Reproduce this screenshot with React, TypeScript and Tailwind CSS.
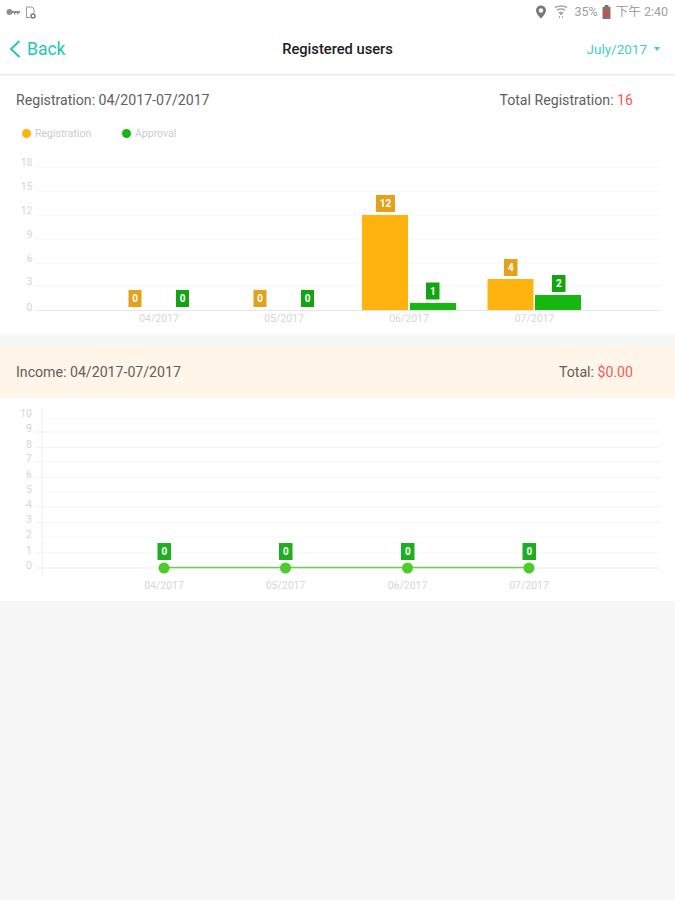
import React from "react";

const ORANGE = "#ffb30f";
const ORANGE_L = "#e3a21a";
const GREEN = "#16b80f";
const GREEN_L = "#12a412";
const LBL = "#d6d6d6";
const FONT = "Roboto, 'Noto Sans CJK TC', sans-serif";

function Tag({ x, y, w, h, fill, t }: { x: number; y: number; w: number; h: number; fill: string; t: string }) {
  return (
    <g>
      <rect x={x} y={y} width={w} height={h} fill={fill} />
      <text x={x + w / 2} y={y + h / 2 + 3.5} textAnchor="middle" fontSize="10" fontWeight="700" fill="#fff" fontFamily={FONT}>
        {t}
      </text>
    </g>
  );
}

function BarChart() {
  const ys: [string, number][] = [["18", 167], ["15", 191], ["12", 215], ["9", 239], ["6", 263], ["3", 286]];
  return (
    <svg width="675" height="192" viewBox="0 142 675 192" className="block">
      {ys.map(([l, y]) => (
        <g key={l}>
          <line x1="35" x2="660" y1={y} y2={y} stroke="#f5f5f5" />
          <text x="32.5" y={y - 1} textAnchor="end" fontSize="10.5" fill={LBL} fontFamily={FONT}>{l}</text>
        </g>
      ))}
      <text x="32.5" y="311" textAnchor="end" fontSize="10.5" fill={LBL} fontFamily={FONT}>0</text>
      <line x1="35" x2="660" y1="310.5" y2="310.5" stroke="#e6e6e6" />
      <rect x="362" y="215" width="46" height="95" fill={ORANGE} />
      <rect x="410" y="303" width="46" height="7" fill={GREEN} />
      <rect x="487.5" y="279" width="46" height="31" fill={ORANGE} />
      <rect x="535" y="295" width="46" height="15" fill={GREEN} />
      <Tag x={128.5} y={290} w={13} h={17} fill={ORANGE_L} t="0" />
      <Tag x={176} y={290} w={13} h={17} fill={GREEN_L} t="0" />
      <Tag x={253.5} y={290} w={13} h={17} fill={ORANGE_L} t="0" />
      <Tag x={301} y={290} w={13} h={17} fill={GREEN_L} t="0" />
      <Tag x={376} y={195} w={19} h={17} fill={ORANGE_L} t="12" />
      <Tag x={426} y={282.5} w={13.5} h={17} fill={GREEN_L} t="1" />
      <Tag x={504} y={259} w={13.5} h={17} fill={ORANGE_L} t="4" />
      <Tag x={552} y={275} w={13.5} h={17} fill={GREEN_L} t="2" />
      {[["04/2017", 159], ["05/2017", 284], ["06/2017", 409], ["07/2017", 534.5]].map(([l, x]) => (
        <text key={l as string} x={x as number} y="322" textAnchor="middle" fontSize="10.5" fill={LBL} fontFamily={FONT}>{l}</text>
      ))}
    </svg>
  );
}

function LineChart() {
  const rows: [string, number][] = [
    ["10", 419], ["9", 432], ["8", 447.5], ["7", 462], ["6", 477.5], ["5", 492], ["4", 507], ["3", 522.5], ["2", 537], ["1", 553],
  ];
  const labelY: Record<string, number> = { "10": 417, "9": 432, "8": 448, "7": 462, "6": 478, "5": 493, "4": 508, "3": 523, "2": 538, "1": 554 };
  const xs = [164, 285.5, 407.5, 529];
  return (
    <svg width="675" height="203" viewBox="0 398 675 203" className="block">
      {rows.map(([l, y]) => (
        <g key={l}>
          <line x1="35" x2="660" y1={y} y2={y} stroke={l === "10" || l === "5" || l === "2" ? "#fafafa" : "#f3f3f3"} />
          <text x="32" y={labelY[l]} textAnchor="end" fontSize="10.5" fill={LBL} fontFamily={FONT}>{l}</text>
        </g>
      ))}
      <text x="32" y="569" textAnchor="end" fontSize="10.5" fill={LBL} fontFamily={FONT}>0</text>
      <line x1="35" x2="660" y1="568" y2="568" stroke="#eeeeee" />
      <line x1="42" x2="42" y1="408" y2="577" stroke="#eeeeee" />
      <line x1="164" x2="529" y1="567.5" y2="567.5" stroke="#66d150" strokeWidth="1.5" />
      {xs.map((x, i) => (
        <g key={x}>
          <circle cx={x} cy="568" r="5.5" fill="#4fcb2c" />
          <Tag x={x - 6.5} y={543} w={13.5} h={17} fill="#1fae1f" t="0" />
          <text x={x} y="589" textAnchor="middle" fontSize="10.5" fill={LBL} fontFamily={FONT}>{["04/2017", "05/2017", "06/2017", "07/2017"][i]}</text>
        </g>
      ))}
    </svg>
  );
}

export default function App() {
  return (
    <div className="w-[675px] h-[900px] bg-[#f7f7f7] overflow-hidden font-['Roboto','Noto_Sans_CJK_TC',sans-serif]">
      {/* status bar */}
      <div className="h-6 bg-white flex items-center justify-between pl-[6px] pr-[7px] text-[#a0a0a0]">
        <div className="flex items-center gap-[5px]">
          <svg width="14" height="8" viewBox="0 0 14 8">
            <circle cx="3.5" cy="4" r="3" fill="#8f8f8f" />
            <path d="M6 3H14V5H12.5V6.5H11V5H9.5V6.5H8V5H6z" fill="#8f8f8f" />
          </svg>
          <svg width="11" height="13" viewBox="0 0 11 13" fill="none">
            <path d="M7 1H1.5V11.5H5" stroke="#9a9a9a" />
            <path d="M7 1L9 3V7" stroke="#9a9a9a" />
            <circle cx="8" cy="10" r="2" stroke="#777" strokeWidth="1.4" />
          </svg>
        </div>
        <div className="flex items-center text-[12.5px] leading-none">
          <svg width="12" height="14" viewBox="0 0 12 14" className="mr-[7px]">
            <path d="M6 0.5a5 5 0 0 1 5 5c0 3.2-5 8-5 8s-5-4.8-5-8a5 5 0 0 1 5-5z" fill="#777" />
            <circle cx="6" cy="5.5" r="2.2" fill="#fff" />
          </svg>
          <svg width="14" height="14" viewBox="0 0 14 14" className="mr-[7px]" fill="none" stroke="#a5a5a5">
            <path d="M1 2.5Q7 -0.5 13 2.5" strokeWidth="1.6" />
            <path d="M3 5Q7 3 11 5" strokeWidth="1.6" />
            <path d="M5 7.5Q7 6.5 9 7.5L7 10z" fill="#a5a5a5" />
            <path d="M5.5 13v-2M8.5 13v-2" />
          </svg>
          <span>35%</span>
          <svg width="9" height="14" viewBox="0 0 9 14" className="ml-[4px] mr-[5px]">
            <rect x="2.5" y="0" width="4" height="2" fill="#777" />
            <rect x="0.5" y="2" width="8" height="12" fill="#777" />
            <path d="M2 4.5L7 12M7 4.5L2 12" stroke="#f0403a" strokeWidth="1.7" />
          </svg>
          <span>下午 2:40</span>
        </div>
      </div>

      {/* nav */}
      <div className="h-[51px] bg-white border-b border-[#ebebeb] shadow-[0_1px_1px_rgba(0,0,0,0.03)] relative flex items-center justify-between pl-[9px] pr-[15px]">
        <div className="flex items-center gap-[6px] text-[#23c8b4]">
          <svg width="12" height="20" viewBox="0 0 12 20" fill="none">
            <path d="M10.5 2L2 10L10.5 18" stroke="#23c8b4" strokeWidth="2" />
          </svg>
          <span className="text-[17.5px] leading-none pt-[2px]">Back</span>
        </div>
        <span className="absolute left-0 right-0 text-center text-[14.7px] font-medium text-[#1c1c1c]">Registered users</span>
        <div className="flex items-center gap-[7px] text-[#3fd0bd] text-[13.5px]">
          <span>July/2017</span>
          <span className="w-0 h-0 border-x-[3.5px] border-x-transparent border-t-[4px] border-t-[#3fd0bd]" />
        </div>
      </div>

      {/* registration */}
      <div className="bg-white h-[259px]">
        <div className="h-[51px] flex items-center justify-between pl-4 pr-[42px] text-[14.15px] text-[#606060]">
          <span>Registration: 04/2017-07/2017</span>
          <span>
            Total Registration: <span className="text-[#f25a5a]">16</span>
          </span>
        </div>
        <div className="h-4 -mt-[1px] mb-[1px] flex items-center pl-[22px] text-[10.5px] text-[#cccccc]">
          <span className="w-[9px] h-[9px] rounded-full bg-[#ffb30f] mr-[4px]" />
          <span className="w-[87px] pt-[2px]">Registration</span>
          <span className="w-[9px] h-[9px] rounded-full bg-[#16b80f] mr-[4px]" />
          <span className="pt-[2px]">Approval</span>
        </div>
        <BarChart />
      </div>

      {/* income */}
      <div className="mt-[13px] h-[51px] bg-[#fff5e9] flex items-center justify-between pl-4 pr-[42px] text-[14.15px] text-[#606060]">
        <span>Income: 04/2017-07/2017</span>
        <span>
          Total:&nbsp;<span className="text-[#f25a5a]">$0.00</span>
        </span>
      </div>
      <div className="bg-white h-[203px]">
        <LineChart />
      </div>
    </div>
  );
}
